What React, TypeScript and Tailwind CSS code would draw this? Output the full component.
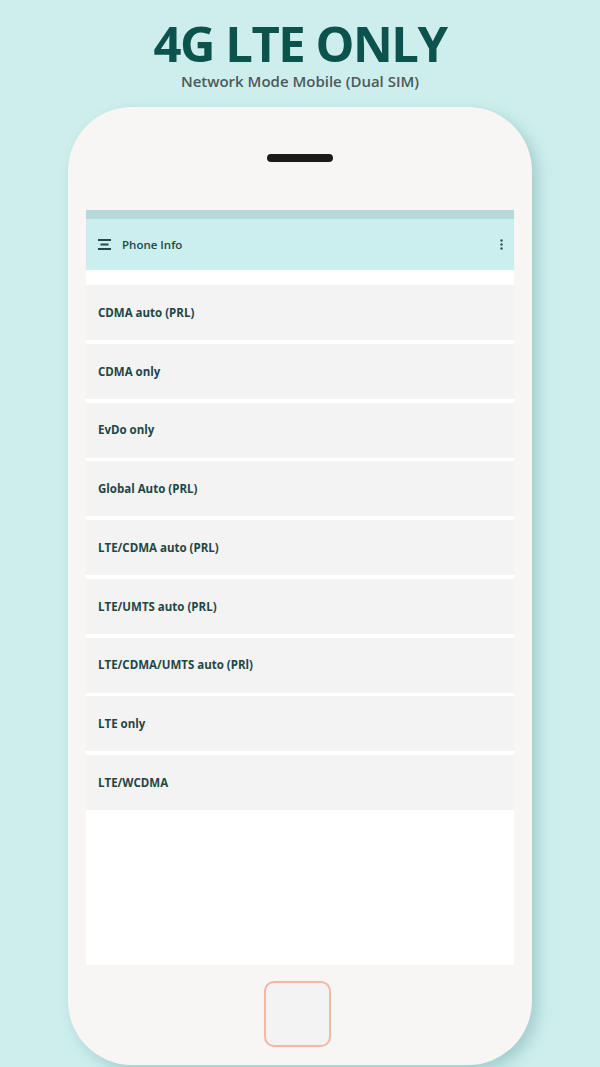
import React from 'react';

const modes = [
  'CDMA auto (PRL)',
  'CDMA only',
  'EvDo only',
  'Global Auto (PRL)',
  'LTE/CDMA auto (PRL)',
  'LTE/UMTS auto (PRL)',
  'LTE/CDMA/UMTS auto (PRl)',
  'LTE only',
  'LTE/WCDMA',
];

function MenuIcon() {
  return (
    <svg width="13" height="11" viewBox="0 0 13 11" className="shrink-0">
      <rect x="0" y="0" width="13" height="2" fill="#1d4a4a" />
      <rect x="2.5" y="4.5" width="8" height="2" fill="#1d4a4a" />
      <rect x="0" y="9" width="13" height="2" fill="#1d4a4a" />
    </svg>
  );
}

function KebabIcon() {
  return (
    <svg width="3" height="11" viewBox="0 0 3 11" className="shrink-0">
      <circle cx="1.5" cy="1.5" r="1.2" fill="#2f5656" />
      <circle cx="1.5" cy="5.5" r="1.2" fill="#2f5656" />
      <circle cx="1.5" cy="9.5" r="1.2" fill="#2f5656" />
    </svg>
  );
}

export default function App() {
  return (
    <div
      className="w-[600px] h-[1067px] overflow-hidden bg-[#cdeeed] flex flex-col items-center"
      style={{ fontFamily: '"Open Sans", "Liberation Sans", sans-serif' }}
    >
      <h1 className="mt-[23px] text-[49px] leading-[40px] font-bold tracking-[-1.5px] text-[#0c534e]">
        4G LTE ONLY
      </h1>
      <p className="mt-[8px] text-[15px] leading-[20px] font-semibold text-[#4b5a5a]">
        Network Mode Mobile (Dual SIM)
      </p>

      {/* handset frame */}
      <div className="mt-[16px] w-[464px] h-[958px] shrink-0 rounded-[64px] bg-[#f8f5f5] shadow-[6px_6px_14px_rgba(40,110,110,0.25)] flex flex-col items-center">
        <div className="mt-[47px] w-[66px] h-[8px] rounded-full bg-[#1b1b1b]" />

        <div className="mt-[48px] w-[428px] h-[755px] bg-white flex flex-col">
          <div className="h-[9px] bg-[#b4d9d9]" />
          <div className="h-[51px] bg-[#cbeeee] flex items-center pl-[12px] pr-[11px]">
            <MenuIcon />
            <span className="ml-[11px] text-[11.5px] font-semibold text-[#1d4848]">Phone Info</span>
            <div className="flex-1" />
            <KebabIcon />
          </div>

          <ul className="mt-[15px] flex flex-col gap-[3.75px]">
            {modes.map((m) => (
              <li key={m} className="h-[55px] bg-[#f3f3f3] flex items-center pl-[12px]">
                <span className="text-[11.5px] font-bold text-[#1f4646]">{m}</span>
              </li>
            ))}
          </ul>
        </div>

        <div className="mt-[16px] mr-[6px] w-[67px] h-[66px] rounded-[10px] border-2 border-[#f1b7a7] bg-[#f3f3f3]" />
      </div>
    </div>
  );
}
